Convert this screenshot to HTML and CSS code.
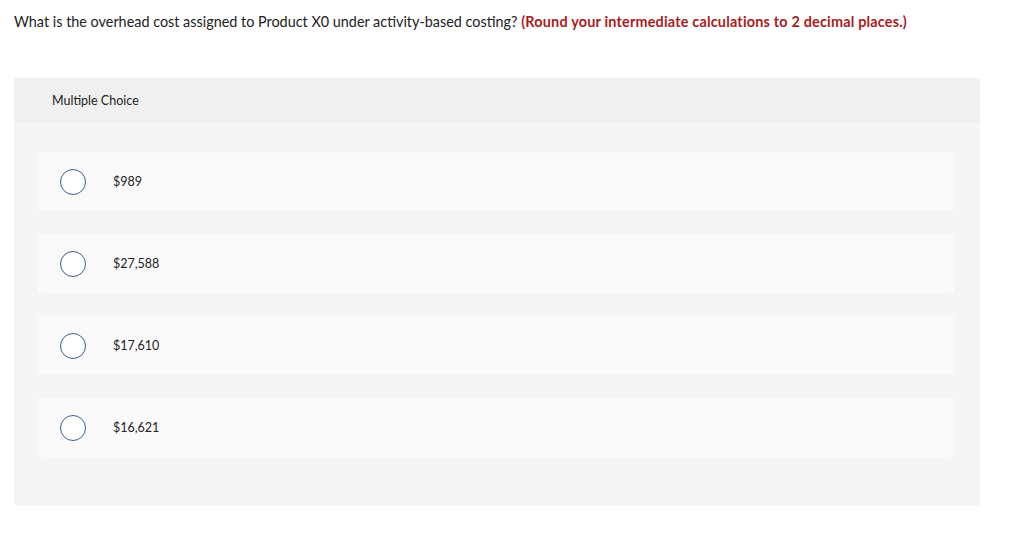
FILE: index.html
```html
<!DOCTYPE html>
<html>
<head>
<meta charset="utf-8">
<link rel="stylesheet" href="styles.css">
</head>
<body>
<div class="page">
  <p class="question">What is the overhead cost assigned to Product X0 under activity-based costing? <strong class="hint">(Round your intermediate calculations to 2 decimal places.)</strong></p>
  <div class="panel">
    <div class="panel-head">Multiple Choice</div>
    <div class="panel-body">
      <div class="option"><span class="radio"></span><span class="label">$989</span></div>
      <div class="option"><span class="radio"></span><span class="label">$27,588</span></div>
      <div class="option"><span class="radio"></span><span class="label">$17,610</span></div>
      <div class="option"><span class="radio"></span><span class="label">$16,621</span></div>
    </div>
  </div>
</div>
</body>
</html>
```
FILE: styles.css
```css
html, body { margin: 0; padding: 0; background: #fff; }
body { font-family: Lato, "Liberation Sans", sans-serif; color: #222; }
.page { padding: 12px 44px 0 14px; }
.question { margin: 0; font-size: 14.4px; line-height: 19px; color: #222; white-space: nowrap; }
.hint { color: #a71c1c; font-weight: 700; letter-spacing: 0.2px; }
.panel { margin-top: 47px; width: 966px; background: #f5f5f5; border-radius: 3px; overflow: hidden; }
.panel-head { height: 45px; background: #f0f0f0; padding-left: 38px; display: flex; align-items: center; font-size: 12.5px; color: #222; }
.panel-body { padding: 29px 26px 49px 24px; display: flex; flex-direction: column; gap: 23px; }
.option { height: 59px; background: #fafafa; border-radius: 3px; display: flex; align-items: center; padding-left: 22px; }
.radio { width: 24px; height: 24px; border: 1px solid #3c5d92; border-radius: 50%; background: #fff; flex: none; }
.label { margin-left: 27px; font-size: 12.5px; color: #222; }
```
